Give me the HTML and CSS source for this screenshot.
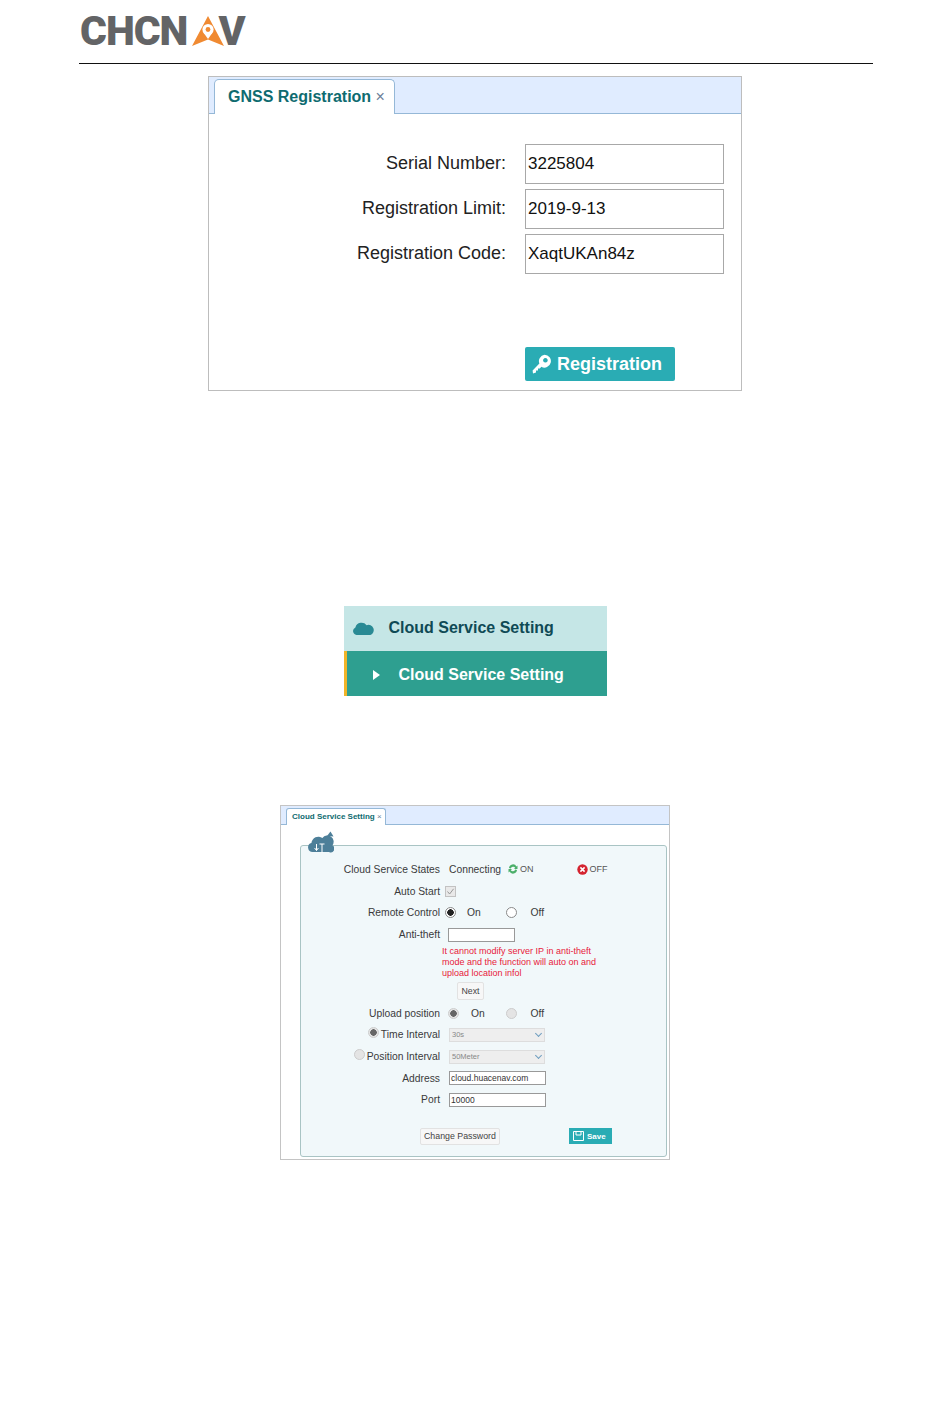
FILE: index.html
```html
<!DOCTYPE html>
<html lang="en">
<head>
    <meta charset="UTF-8">
    <meta name="viewport" content="width=device-width, initial-scale=1.0">
    <title>CHCNAV Registration and Cloud Service</title>
    <link rel="stylesheet" href="styles.css">
</head>
<body>
    <header class="doc-header">
        <div class="logo">
            <span>CHCN</span>
            <svg class="logo-a" viewBox="0 0 32 30" width="32" height="30">
                <path d="M16 0 L32 30 L16 23.5 L0 30 Z" fill="#f08a32"/>
                <circle cx="16" cy="13.5" r="5.6" fill="#fff"/>
                <circle cx="16" cy="13.5" r="2.4" fill="#f08a32"/>
                <path d="M11.4 16.5 L16 23 L20.6 16.5 Z" fill="#fff"/>
            </svg>
            <span>V</span>
        </div>
    </header>

    <!-- GNSS registration -->
    <section class="fig-reg">
        <div class="tabs">
            <div class="tab">GNSS Registration <span class="tab-x">×</span></div>
        </div>
        <form class="reg-form">
            <label>Serial Number:</label>
            <input class="reg-input" type="text" value="3225804">
            <label>Registration Limit:</label>
            <input class="reg-input" type="text" value="2019-9-13">
            <label>Registration Code:</label>
            <input class="reg-input" type="text" value="XaqtUKAn84z">
            <button type="button" class="reg-button">
                <svg viewBox="0 0 20 20" width="20" height="20">
                    <path d="M12.6 0.8 A6.4 6.4 0 1 1 9.4 12.8 L7.8 14.4 L6 14.4 L6 16.4 L4 16.4 L4 18.4 L1 19.4 L0.6 16.6 L7.4 9.6 A6.4 6.4 0 0 1 12.6 0.8 Z M13.4 4 A2.3 2.3 0 1 0 13.41 4 Z" fill="#fff" fill-rule="evenodd"/>
                </svg>
                Registration
            </button>
        </form>
    </section>

    <!-- menu entry -->
    <nav class="fig-menu">
        <div class="menu-head">
            <svg viewBox="0 0 22 14" width="22" height="14">
                <path d="M4.5 14 A4 4 0 0 1 3.4 6.4 A6.4 6.4 0 0 1 14.6 4.2 A4.6 4.6 0 0 1 18.4 14 Z" fill="#2a8a94"/>
            </svg>
            <span>Cloud Service Setting</span>
        </div>
        <div class="menu-item">
            <span class="menu-arrow"></span>
            <span>Cloud Service Setting</span>
        </div>
    </nav>

    <!-- cloud service settings -->
    <section class="fig-cloud">
        <div class="tabs small">
            <div class="tab">Cloud Service Setting <span class="tab-x">×</span></div>
        </div>
        <div class="cloud-body">
            <svg class="cloud-icon" viewBox="0 0 26 22" width="26" height="22">
                <path d="M5 21 A4.6 4.6 0 0 1 3.4 12 A7 7 0 0 1 14.4 7 A6 6 0 0 1 24.4 14.5 A3.6 3.6 0 0 1 21 21 Z" fill="#4d7f99"/>
                <path d="M8.5 19.5 L8.5 13 M6.6 17 L8.5 19.5 L10.4 17 M11.5 13 L16.5 13 M14 13 L14 22" stroke="#fff" stroke-width="1" fill="none"/>
                <path d="M19 5 L22.5 0.5 L25.5 5.5 Z" fill="#4d7f99"/>
            </svg>
            <div class="panel">
                <div class="row">
                    <label class="row-label">Cloud Service States</label>
                    <span class="status-text">Connecting</span>
                    <svg class="status-on" viewBox="0 0 10 10" width="10" height="10">
                        <path d="M1 4 A4 4 0 0 1 8.5 2.5 L9.5 1.5 L9.5 5 L6 5 L7.2 3.8 A2.5 2.5 0 0 0 2.8 4.5 Z M9 6 A4 4 0 0 1 1.5 7.5 L0.5 8.5 L0.5 5 L4 5 L2.8 6.2 A2.5 2.5 0 0 0 7.2 5.5 Z" fill="#4caf6a"/>
                    </svg>
                    <span class="status-flag">ON</span>
                    <svg class="status-off" viewBox="0 0 11 11" width="11" height="11">
                        <circle cx="5.5" cy="5.5" r="5.2" fill="#d4232f"/>
                        <path d="M3.4 3.4 L7.6 7.6 M7.6 3.4 L3.4 7.6" stroke="#fff" stroke-width="1.5"/>
                    </svg>
                    <span class="status-flag">OFF</span>
                </div>
                <div class="row">
                    <label class="row-label">Auto Start</label>
                    <span class="check">
                        <svg viewBox="0 0 11 11" width="11" height="11">
                            <path d="M2.5 5.5 L4.6 8 L8.6 2.8" stroke="#999" stroke-width="1" fill="none"/>
                        </svg>
                    </span>
                </div>
                <div class="row">
                    <label class="row-label">Remote Control</label>
                    <input class="radio radio-remote" type="radio" name="remote" checked>
                    <span class="opt-on">On</span>
                    <input class="radio" type="radio" name="remote">
                    <span class="opt-off">Off</span>
                </div>
                <div class="row">
                    <label class="row-label">Anti-theft</label>
                    <input class="text-input anti" type="text">
                </div>
                <p class="note">It cannot modify server IP in anti-theft mode and the function will auto on and upload location infol</p>
                <button type="button" class="btn next">Next</button>
                <div class="row">
                    <label class="row-label">Upload position</label>
                    <input class="radio off" type="radio" name="upload" checked disabled>
                    <span class="opt-on short">On</span>
                    <input class="radio off" type="radio" name="upload" disabled>
                    <span class="opt-off">Off</span>
                </div>
                <div class="row">
                    <label class="row-label"><input class="radio off raised" type="radio" name="mode" checked disabled>Time Interval</label>
                    <div class="select">30s</div>
                </div>
                <div class="row">
                    <label class="row-label"><input class="radio off raised" type="radio" name="mode" disabled>Position Interval</label>
                    <div class="select">50Meter</div>
                </div>
                <div class="row">
                    <label class="row-label">Address</label>
                    <input class="text-input wide" type="text" value="cloud.huacenav.com">
                </div>
                <div class="row">
                    <label class="row-label">Port</label>
                    <input class="text-input wide" type="text" value="10000">
                </div>
                <div class="panel-actions">
                    <button type="button" class="btn">Change Password</button>
                    <button type="button" class="btn-save">
                        <svg viewBox="0 0 11 10" width="11" height="10">
                            <path d="M0.5 0.5 H10.5 V9.5 H0.5 Z M3 0.5 V4 H8 V0.5" stroke="#fff" fill="none"/>
                        </svg>
                        Save
                    </button>
                </div>
            </div>
        </div>
    </section>
</body>
</html>
```

FILE: styles.css
```css
body {
    margin: 0;
    font-family: "Liberation Sans", Arial, sans-serif;
    color: #222;
    background: #fff;
}

.doc-header {
    height: 63px;
    margin: 0 77px 0 79px;
    border-bottom: 1px solid #111;
    box-sizing: content-box;
}
.logo {
    display: flex;
    align-items: center;
    padding: 13px 0 0 1px;
    height: 36px;
    font-family: Roboto, sans-serif;
    font-weight: 900;
    font-size: 41px;
    letter-spacing: -1px;
    line-height: 36px;
    color: #636466;
}
.logo-a {
    margin: 0 -6px 0 5px;
}

/* tabs */
.tabs {
    display: flex;
    height: 36px;
    padding-left: 5px;
    background: #e0ecff;
    border-bottom: 1px solid #95b8d7;
}
.tab {
    height: 34px;
    margin-top: 2px;
    padding: 0 9px 0 13px;
    background: #fff;
    border: 1px solid #95b8d7;
    border-bottom: none;
    border-radius: 5px 5px 0 0;
    font-size: 16px;
    font-weight: bold;
    line-height: 34px;
    color: #0e6b70;
    white-space: nowrap;
}
.tab-x {
    font-weight: normal;
    color: #6b7f9a;
}
.tabs.small {
    height: 18px;
}
.tabs.small .tab {
    height: 16px;
    padding: 0 3px 0 5px;
    font-size: 8px;
    line-height: 15px;
    border-radius: 3px 3px 0 0;
}

/* registration */
.fig-reg {
    width: 532px;
    height: 313px;
    margin: 12px auto 0;
    border: 1px solid #bdbdbd;
}
.reg-form {
    display: grid;
    grid-template-columns: 297px 199px;
    grid-auto-rows: 40px;
    column-gap: 19px;
    row-gap: 5px;
    padding-top: 30px;
    font-size: 18px;
}
.reg-form label {
    text-align: right;
    line-height: 39px;
    color: #222;
}
.reg-input {
    box-sizing: border-box;
    width: 199px;
    height: 40px;
    padding: 0 2px;
    border: 1px solid #a8a8a8;
    border-radius: 0;
    font-family: inherit;
    font-size: 17px;
    color: #111;
}
.reg-button {
    grid-column: 2;
    display: flex;
    align-items: center;
    gap: 5px;
    width: 150px;
    height: 34px;
    margin-top: 68px;
    padding: 0 0 0 7px;
    border: none;
    border-radius: 2px;
    background: #2aacb4;
    color: #fff;
    font-family: inherit;
    font-size: 18px;
    font-weight: bold;
}

/* menu */
.fig-menu {
    width: 263px;
    margin: 215px auto 0;
    font-size: 16px;
    font-weight: bold;
}
.menu-head {
    display: flex;
    align-items: center;
    gap: 15px;
    box-sizing: border-box;
    height: 45px;
    padding: 0 0 2px 8px;
    background: #c5e6e6;
    color: #0f4a55;
}
.menu-item {
    display: flex;
    align-items: center;
    gap: 19px;
    box-sizing: border-box;
    height: 45px;
    padding: 3px 0 0 26px;
    border-left: 3px solid #f0b428;
    background: #2e9f90;
    color: #fff;
}
.menu-arrow {
    width: 0;
    height: 0;
    border-left: 7px solid #fff;
    border-top: 5px solid transparent;
    border-bottom: 5px solid transparent;
}

/* cloud settings */
.fig-cloud {
    width: 388px;
    height: 353px;
    margin: 109px auto 0;
    border: 1px solid #c4c4c4;
    font-size: 10.3px;
    color: #3a3a3a;
}
.cloud-body {
    position: relative;
    padding: 20px 2px 0 19px;
}
.cloud-icon {
    position: absolute;
    left: 27px;
    top: 6px;
}
.panel {
    box-sizing: border-box;
    width: 367px;
    height: 312px;
    padding-top: 12.6px;
    background: #f1f8fa;
    border: 1px solid #a9c4c4;
    border-radius: 3px;
}
.row {
    display: flex;
    align-items: center;
    height: 21.7px;
}
.row-label {
    display: flex;
    justify-content: flex-end;
    align-items: center;
    box-sizing: border-box;
    flex: none;
    width: 139px;
}
.status-text {
    margin-left: 9px;
}
.status-on {
    margin-left: 7px;
}
.status-off {
    margin-left: 43px;
}
.status-flag {
    margin-left: 2px;
    font-size: 9px;
    color: #555;
}
.check {
    display: block;
    box-sizing: border-box;
    width: 11px;
    height: 11px;
    margin-left: 5px;
    border: 1px solid #c2c2c2;
    background: #e9e9e9;
}
.check svg {
    display: block;
    margin: -1px;
}
.radio {
    appearance: none;
    box-sizing: border-box;
    flex: none;
    width: 11px;
    height: 11px;
    margin: 0 0 0 8px;
    border: 1px solid #8a8a8a;
    border-radius: 50%;
    background: #fff;
}
.radio:checked {
    background: radial-gradient(circle, #222 0 3px, #fff 3.5px);
}
.radio-remote {
    margin-left: 5px;
}
.radio.off {
    border-color: #ccc;
    background: #e4e4e4;
}
.radio.off:checked {
    background: radial-gradient(circle, #666 0 3px, #e4e4e4 3.5px);
}
.radio.raised {
    margin: 0 2px 4px 0;
}
.opt-on {
    width: 31px;
    margin-left: 11px;
}
.opt-on.short {
    width: 27px;
    margin-left: 12px;
}
.opt-off {
    margin-left: 13.5px;
}
.text-input {
    box-sizing: border-box;
    height: 14px;
    margin: 0 0 0 9px;
    padding: 0 1px;
    border: 1px solid #999;
    border-radius: 0;
    background: #fff;
    font-family: inherit;
    font-size: 8.5px;
    color: #333;
}
.anti {
    width: 67px;
    margin-left: 8px;
}
.wide {
    width: 97px;
}
.select {
    position: relative;
    box-sizing: border-box;
    width: 96px;
    height: 14px;
    margin-left: 9px;
    padding-left: 2px;
    background: #eee;
    border: 1px solid #ddd;
    font-size: 7.5px;
    line-height: 12px;
    color: #888;
}
.select::after {
    content: "";
    position: absolute;
    right: 3px;
    top: 2px;
    width: 4px;
    height: 4px;
    border-right: 1px solid #6f9fc0;
    border-bottom: 1px solid #6f9fc0;
    transform: rotate(45deg);
}
.note {
    width: 160px;
    margin: 1px 0 0 141px;
    font-size: 9px;
    line-height: 11px;
    color: #e8203a;
}
.btn {
    height: 17px;
    padding: 0 3px;
    border: 1px solid #e2e2e2;
    border-radius: 2px;
    background: #f7f7f7;
    font-family: inherit;
    font-size: 8.8px;
    color: #444;
}
.next {
    display: block;
    width: 27px;
    height: 18px;
    margin: 3px 0 2px 156px;
    padding: 0;
}
.panel-actions {
    display: flex;
    align-items: center;
    gap: 69px;
    margin-top: 17px;
    padding-left: 119px;
}
.btn-save {
    display: flex;
    align-items: center;
    gap: 3px;
    width: 43px;
    height: 16px;
    padding: 0 0 0 4px;
    border: none;
    background: #2aacb4;
    color: #fff;
    font-family: inherit;
    font-size: 8px;
    font-weight: bold;
}
```
